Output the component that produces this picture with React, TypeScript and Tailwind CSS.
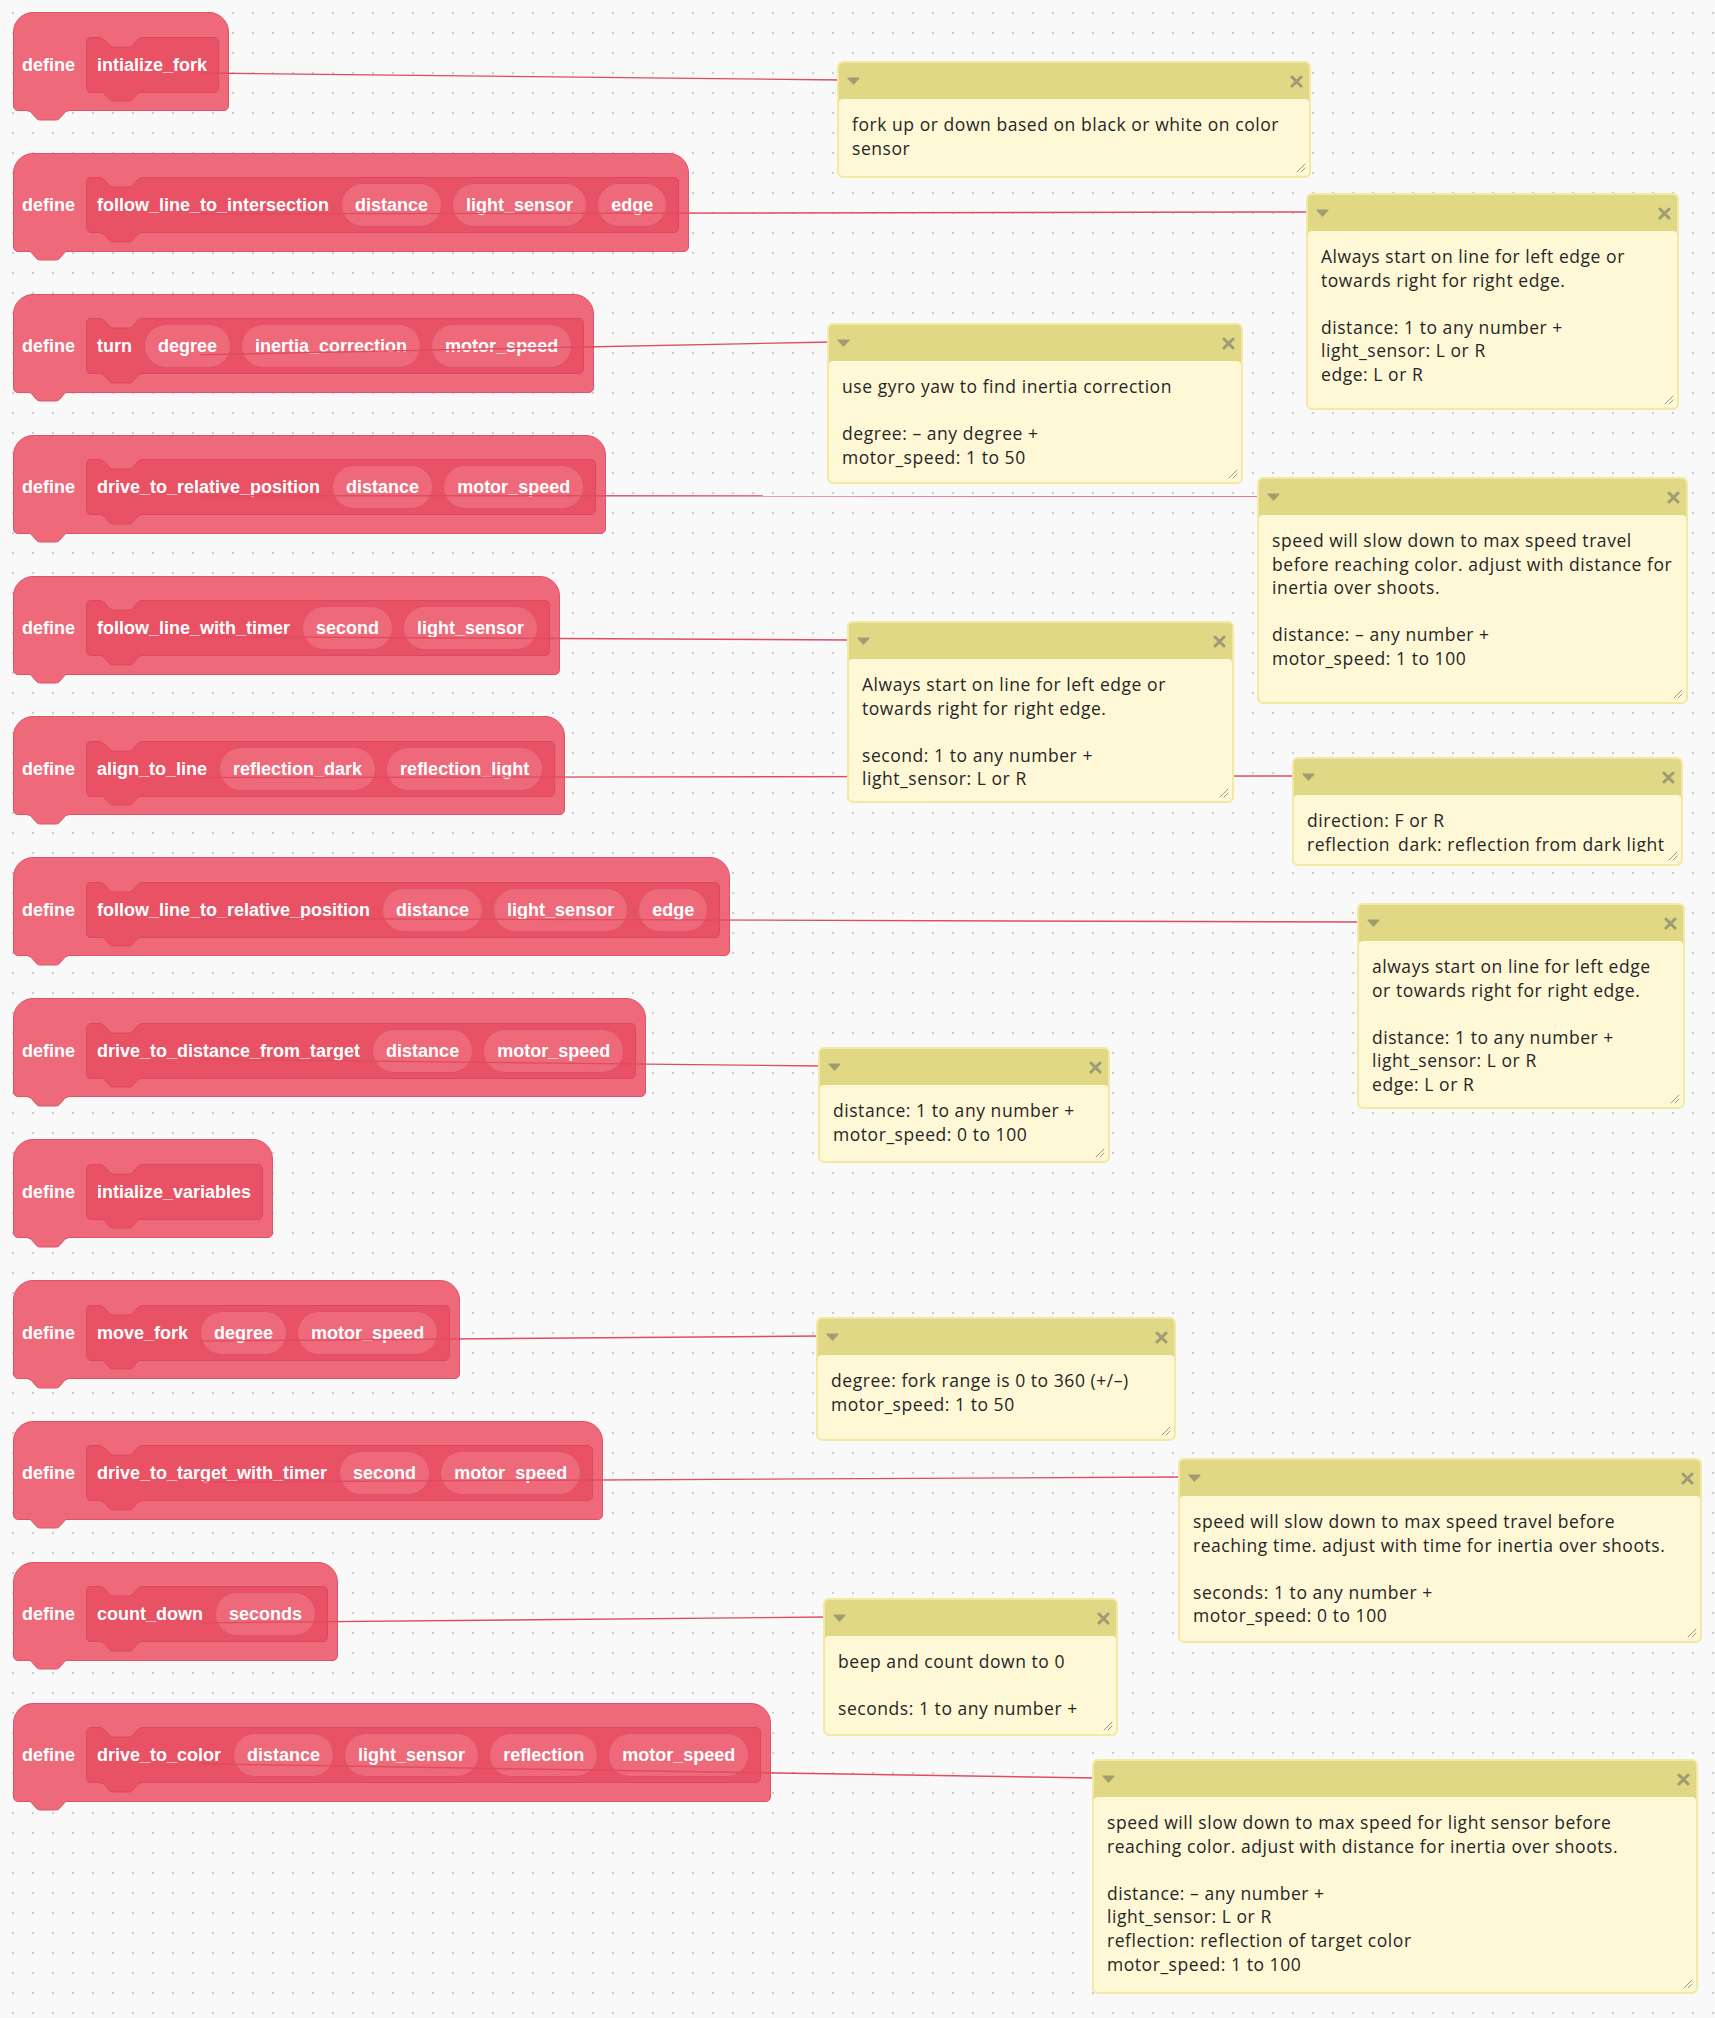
import React from "react";

type BlockDef = { name: string; args: string[] };

const blocks: BlockDef[] = [
  { name: "intialize_fork", args: [] },
  { name: "follow_line_to_intersection", args: ["distance", "light_sensor", "edge"] },
  { name: "turn", args: ["degree", "inertia_correction", "motor_speed"] },
  { name: "drive_to_relative_position", args: ["distance", "motor_speed"] },
  { name: "follow_line_with_timer", args: ["second", "light_sensor"] },
  { name: "align_to_line", args: ["reflection_dark", "reflection_light"] },
  { name: "follow_line_to_relative_position", args: ["distance", "light_sensor", "edge"] },
  { name: "drive_to_distance_from_target", args: ["distance", "motor_speed"] },
  { name: "intialize_variables", args: [] },
  { name: "move_fork", args: ["degree", "motor_speed"] },
  { name: "drive_to_target_with_timer", args: ["second", "motor_speed"] },
  { name: "count_down", args: ["seconds"] },
  { name: "drive_to_color", args: ["distance", "light_sensor", "reflection", "motor_speed"] },
];

type CommentDef = { b: number; x: number; y: number; w: number; h: number; text: string; clip?: boolean };

const comments: CommentDef[] = [
  { b: 0, x: 837, y: 61, w: 474, h: 117, text: "fork up or down based on black or white on color\nsensor" },
  {
    b: 1, x: 1306, y: 193, w: 373, h: 217,
    text: "Always start on line for left edge or\ntowards right for right edge.\n\ndistance: 1 to any number +\nlight_sensor: L or R\nedge: L or R",
  },
  { b: 2, x: 827, y: 323, w: 416, h: 161, text: "use gyro yaw to find inertia correction\n\ndegree: \u2013 any degree +\nmotor_speed: 1 to 50" },
  {
    b: 3, x: 1257, y: 477, w: 431, h: 227,
    text: "speed will slow down to max speed travel\nbefore reaching color. adjust with distance for\ninertia over shoots.\n\ndistance: \u2013 any number +\nmotor_speed: 1 to 100",
  },
  {
    b: 4, x: 847, y: 621, w: 387, h: 182,
    text: "Always start on line for left edge or\ntowards right for right edge.\n\nsecond: 1 to any number +\nlight_sensor: L or R",
  },
  { b: 5, x: 1292, y: 757, w: 391, h: 109, text: "direction: F or R\nreflection_dark: reflection from dark light", clip: true },
  {
    b: 6, x: 1357, y: 903, w: 328, h: 206,
    text: "always start on line for left edge\nor towards right for right edge.\n\ndistance: 1 to any number +\nlight_sensor: L or R\nedge: L or R",
  },
  { b: 7, x: 818, y: 1047, w: 292, h: 116, text: "distance: 1 to any number +\nmotor_speed: 0 to 100" },
  { b: 9, x: 816, y: 1317, w: 360, h: 124, text: "degree: fork range is 0 to 360 (+/\u2013)\nmotor_speed: 1 to 50" },
  {
    b: 10, x: 1178, y: 1458, w: 524, h: 185,
    text: "speed will slow down to max speed travel before\nreaching time. adjust with time for inertia over shoots.\n\nseconds: 1 to any number +\nmotor_speed: 0 to 100",
  },
  { b: 11, x: 823, y: 1598, w: 295, h: 138, text: "beep and count down to 0\n\nseconds: 1 to any number +" },
  {
    b: 12, x: 1092, y: 1759, w: 606, h: 235,
    text: "speed will slow down to max speed for light sensor before\nreaching color. adjust with distance for inertia over shoots.\n\ndistance: \u2013 any number +\nlight_sensor: L or R\nreflection: reflection of target color\nmotor_speed: 1 to 100",
  },
];

const NOTCH_FILL = "M0 0 C1.5 0 2.5 0.7 3.2 1.4 L8.6 7.6 C9.3 8.3 10.3 9 11.8 9 H28.2 C29.7 9 30.7 8.3 31.4 7.6 L36.8 1.4 C37.5 0.7 38.5 0 40 0 Z";
const NOTCH_EDGE = "M0 0 C1.5 0 2.5 0.7 3.2 1.4 L8.6 7.6 C9.3 8.3 10.3 9 11.8 9 H28.2 C29.7 9 30.7 8.3 31.4 7.6 L36.8 1.4 C37.5 0.7 38.5 0 40 0";

function Notch({ fill, stroke, className }: { fill: string; stroke: string; className: string }) {
  return (
    <svg className={className} width="42" height="11" viewBox="-1 0 42 11" fill="none">
      <path d={NOTCH_FILL} transform="translate(0 1)" fill={fill} />
      <rect x="0" y="0" width="40" height="1.5" fill={fill} />
      <path d={NOTCH_EDGE} transform="translate(0 1)" stroke={stroke} strokeWidth="1" />
    </svg>
  );
}

function Block({ def }: { def: BlockDef }) {
  return (
    <div className="relative flex h-[99px] items-center rounded-t-[20px] rounded-b-[5px] border border-[#DF5469] bg-[#EE6A7B] pl-[8px] pr-[9px] pt-[6px]">
      <span className="mr-[11px] text-[18px] font-bold leading-none text-white">define</span>
      <div className="relative flex h-[56px] items-center rounded-[5px] border border-[#DA4A5D] bg-[#E95264] pl-[10px] pr-[11px]">
        <span className="text-[18px] font-bold leading-none text-white">{def.name}</span>
        {def.args.length > 0 && (
          <div className="ml-[12px] flex items-center gap-[10px]">
            {def.args.map((a) => (
              <span
                key={a}
                className="flex h-[44px] items-center rounded-full border border-[#DF5368] bg-[#EE6A7B] px-[13px] text-[18px] font-bold leading-none text-white"
              >
                {a}
              </span>
            ))}
          </div>
        )}
        <Notch fill="#EE6A7B" stroke="#DA4A5D" className="absolute left-[13px] top-[-1px]" />
        <Notch fill="#E95264" stroke="#DA4A5D" className="absolute left-[13px] top-[calc(100%-0.5px)]" />
      </div>
      <Notch fill="#EE6A7B" stroke="#DF5469" className="absolute left-[13px] top-[calc(100%-0.5px)]" />
    </div>
  );
}

function Comment({ c }: { c: CommentDef }) {
  return (
    <div
      className="absolute z-20 flex flex-col rounded-[6px] border-2 border-[#F3E9A2] bg-[#E0D884]"
      style={{ left: c.x, top: c.y, width: c.w, height: c.h }}
    >
      <div className="flex h-[36px] shrink-0 items-center justify-between pl-[8px] pr-[6px]">
        <svg width="13" height="8" viewBox="0 0 13 8">
          <path d="M1 1 H12 L6.5 7 Z" fill="#A19D72" stroke="#A19D72" strokeWidth="1.2" strokeLinejoin="round" />
        </svg>
        <svg width="13" height="13" viewBox="0 0 13 13">
          <path d="M2 2 L11 11 M11 2 L2 11" stroke="#9E9B76" strokeWidth="3" strokeLinecap="round" />
        </svg>
      </div>
      <div
        className={
          c.clip
            ? "relative flex flex-1 flex-col overflow-hidden rounded-[4px] bg-[#FFF8D6] pl-[13px] pr-[6px] pt-[14px] pb-[12px]"
            : "relative flex flex-1 flex-col overflow-hidden rounded-[4px] bg-[#FFF8D6] pl-[13px] pr-[6px] pt-[14px] pb-[6px]"
        }
      >
        <div className="flex-1 overflow-hidden whitespace-pre font-['Open_Sans',sans-serif] text-[17.5px] leading-[23.6px] tracking-[0.55px] text-[#262626]">
          {c.text}
        </div>
        <svg className="absolute bottom-[3px] right-[3px]" width="11" height="11" viewBox="0 0 11 11">
          <path d="M10 2 L2 10 M10 6 L6 10" stroke="#9C9A82" strokeWidth="1" strokeLinecap="round" />
        </svg>
      </div>
    </div>
  );
}

const TOP0 = 12;
const STEP = 140.9;

export default function App() {
  return (
    <div className="relative h-[2018px] w-[1715px] overflow-hidden bg-[#F9F9F9] bg-[radial-gradient(circle,#cdcdcd_0.8px,transparent_1.2px)] [background-position:3px_3px] [background-size:20px_20px] font-['Liberation_Sans',Arial,sans-serif]">
      <div className="flex flex-col items-start gap-[41.9px] pl-[13px] pt-[12px]">
        {blocks.map((b) => (
          <Block key={b.name} def={b} />
        ))}
      </div>
      <svg className="pointer-events-none absolute inset-0 z-10" width="1715" height="2018">
        {comments.map((c) => {
          const y0 = TOP0 + c.b * STEP + 61;
          return (
            <line
              key={c.b}
              x1={200}
              y1={y0}
              x2={c.x + 4}
              y2={c.y + 19}
              stroke="#E04B5F"
              strokeWidth="1.4"
            />
          );
        })}
      </svg>
      {comments.map((c) => (
        <Comment key={c.b} c={c} />
      ))}
    </div>
  );
}
